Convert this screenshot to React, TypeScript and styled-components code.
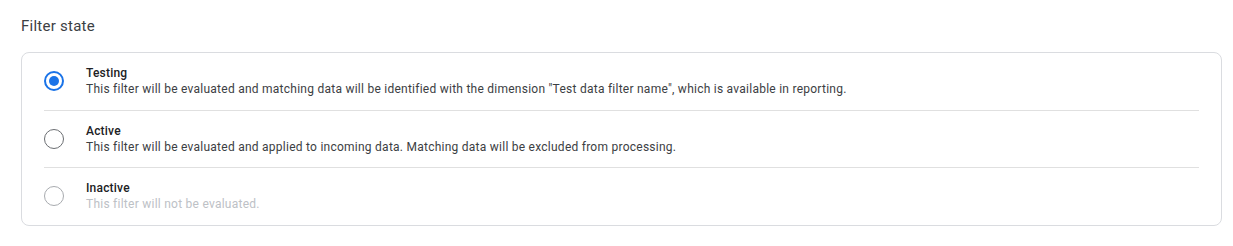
import React, { useState } from 'react';
import styled, { createGlobalStyle } from 'styled-components';

const GlobalStyle = createGlobalStyle`
  body {
    margin: 0;
    background: #fff;
    font-family: Roboto, "Liberation Sans", Arial, sans-serif;
  }
`;

const Section = styled.section`
  padding: 16px 11px 0 21px;
`;

const Title = styled.h2`
  margin: 0 0 16px;
  font-size: 15px;
  font-weight: 400;
  line-height: 20px;
  letter-spacing: 0.25px;
  color: #3c4043;
`;

const Card = styled.div`
  border: 1px solid #dadce0;
  border-radius: 8px;
  padding: 0 22px;
`;

const Option = styled.label<{ $disabled?: boolean }>`
  display: flex;
  align-items: center;
  gap: 22px;
  padding: 12px 0 12.5px;
  cursor: ${(p) => (p.$disabled ? 'default' : 'pointer')};
  & + & {
    border-top: 1px solid #e0e0e0;
  }
`;

const Radio = styled.span<{ $checked?: boolean; $disabled?: boolean }>`
  position: relative;
  flex: none;
  width: 20px;
  height: 20px;
  box-sizing: border-box;
  border-radius: 50%;
  border: ${(p) => (p.$checked ? '2px' : '1.5px')} solid
    ${(p) => (p.$checked ? '#1a73e8' : p.$disabled ? '#a8abaf' : '#6b6e72')};
  &::after {
    content: '';
    position: absolute;
    inset: 3px;
    border-radius: 50%;
    background: #1a73e8;
    display: ${(p) => (p.$checked ? 'block' : 'none')};
  }
`;

const Texts = styled.div`
  display: flex;
  flex-direction: column;
`;

const Label = styled.span`
  font-size: 12px;
  font-weight: 500;
  line-height: 16px;
  letter-spacing: 0.2px;
  color: #202124;
`;

const Description = styled.span<{ $disabled?: boolean }>`
  font-size: 12px;
  line-height: 16px;
  letter-spacing: 0.25px;
  color: ${(p) => (p.$disabled ? '#bdc1c6' : '#3c4043')};
`;

const options = [
  {
    id: 'testing',
    label: 'Testing',
    description:
      'This filter will be evaluated and matching data will be identified with the dimension "Test data filter name", which is available in reporting.',
  },
  {
    id: 'active',
    label: 'Active',
    description:
      'This filter will be evaluated and applied to incoming data. Matching data will be excluded from processing.',
  },
  {
    id: 'inactive',
    label: 'Inactive',
    description: 'This filter will not be evaluated.',
    disabled: true,
  },
];

export default function App() {
  const [state, setState] = useState('testing');
  return (
    <>
      <GlobalStyle />
      <Section>
        <Title>Filter state</Title>
        <Card>
          {options.map((o) => (
            <Option
              key={o.id}
              $disabled={o.disabled}
              onClick={() => !o.disabled && setState(o.id)}
            >
              <Radio $checked={state === o.id} $disabled={o.disabled} />
              <Texts>
                <Label>{o.label}</Label>
                <Description $disabled={o.disabled}>{o.description}</Description>
              </Texts>
            </Option>
          ))}
        </Card>
      </Section>
    </>
  );
}
